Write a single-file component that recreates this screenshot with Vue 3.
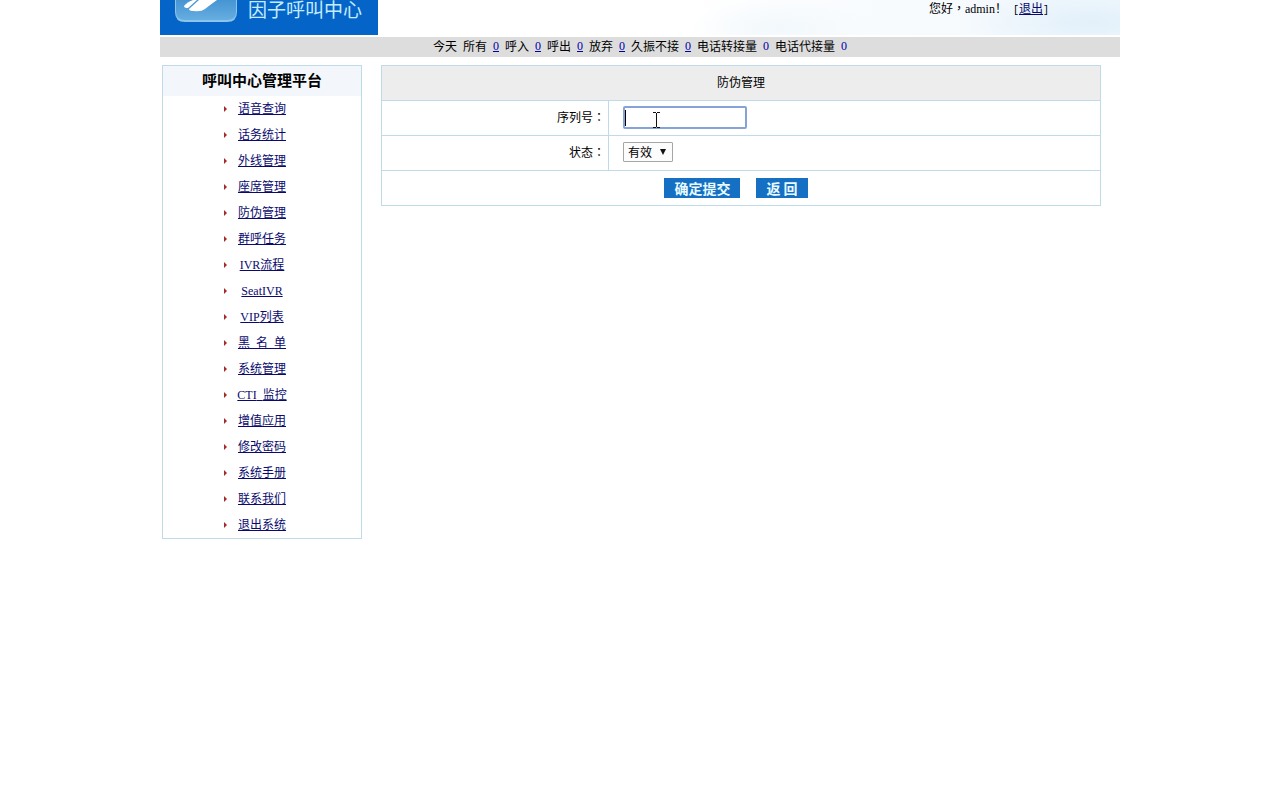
<script setup>
import { ref } from 'vue'

const stats = [
  { label: '所有', value: 0, link: true },
  { label: '呼入', value: 0, link: true },
  { label: '呼出', value: 0, link: true },
  { label: '放弃', value: 0, link: true },
  { label: '久振不接', value: 0, link: true },
  { label: '电话转接量', value: 0, link: false },
  { label: '电话代接量', value: 0, link: false },
]

const menu = [
  { cjk: '语音查询' },
  { cjk: '话务统计' },
  { cjk: '外线管理' },
  { cjk: '座席管理' },
  { cjk: '防伪管理' },
  { cjk: '群呼任务' },
  { latin: 'IVR', cjk: '流程' },
  { latin: 'SeatIVR' },
  { latin: 'VIP', cjk: '列表' },
  { spaced: ['黑', '名', '单'] },
  { cjk: '系统管理' },
  { latin: 'CTI', spaced: ['', '监控'] },
  { cjk: '增值应用' },
  { cjk: '修改密码' },
  { cjk: '系统手册' },
  { cjk: '联系我们' },
  { cjk: '退出系统' },
]

const serial = ref('')
const state = ref('有效')
</script>

<template>
  <div class="page">
    <header class="banner">
      <div class="brand">
        <svg class="logo" width="62" height="22" viewBox="0 0 62 22" aria-hidden="true">
          <defs>
            <linearGradient id="tile" x1="0" y1="0" x2="0" y2="1">
              <stop offset="0" stop-color="#3f8fd0" />
              <stop offset="1" stop-color="#66aee0" />
            </linearGradient>
          </defs>
          <path d="M0 -4H62V12Q62 22 52 22H10Q0 22 0 12Z" fill="#8cc4ea" />
          <path d="M1 -4H61V12Q61 20 52 20H10Q1 20 1 12Z" fill="url(#tile)" />
          <path d="M9 6Q12 2 18 0H22L13 8Q9 8 9 6Z" fill="#fff" />
          <path d="M14 9L24 0H42Q35 5 30 9Q26 12 19 11Q14 11 14 9Z" fill="#fff" />
        </svg>
        <span class="brand-name">因子呼叫中心</span>
      </div>
      <div class="greeting">
        <span>您好</span><span class="centered">，</span><span class="latin">admin</span><span>！</span><span class="half">&nbsp;[</span><a href="#">退出</a><span class="half">]</span>
      </div>
    </header>

    <div class="stats">
      <span>今天</span>
      <template v-for="s in stats" :key="s.label">
        <span>{{ s.label }}</span>
        <a v-if="s.link" href="#" class="latin num">{{ s.value }}</a>
        <span v-else class="latin num">{{ s.value }}</span>
      </template>
    </div>

    <div class="body">
      <nav class="side">
        <h2>呼叫中心管理平台</h2>
        <ul>
          <li v-for="(m, i) in menu" :key="i">
            <svg class="arrow" width="3" height="6" viewBox="0 0 3 6" aria-hidden="true">
              <path d="M0 0L3 3L0 6Z" fill="#a52a2a" />
            </svg>
            <a href="#"><span v-if="m.latin" class="latin">{{ m.latin }}</span><template v-if="m.cjk">{{ m.cjk }}</template><template v-if="m.spaced"><template v-for="(c, j) in m.spaced" :key="j"><span v-if="j" class="half">&nbsp;</span>{{ c }}</template></template></a>
          </li>
        </ul>
      </nav>

      <main>
        <form @submit.prevent>
          <table>
            <colgroup>
              <col class="label-col" />
              <col />
            </colgroup>
            <thead>
              <tr>
                <th colspan="2">防伪管理</th>
              </tr>
            </thead>
            <tbody>
              <tr>
                <td class="label"><label for="serial">序列号<span class="centered">：</span></label></td>
                <td class="field">
                  <div class="control">
                    <input id="serial" v-model="serial" type="text" autocomplete="off" />
                    <span class="caret"></span>
                    <svg class="ibeam" width="7" height="16" viewBox="0 0 7 16" aria-hidden="true">
                      <path d="M0 .5H3M4 .5H7M3.5 1V15M0 15.5H3M4 15.5H7" stroke="#111" fill="none" />
                    </svg>
                  </div>
                </td>
              </tr>
              <tr>
                <td class="label"><label for="state">状态<span class="centered">：</span></label></td>
                <td class="field">
                  <div class="control">
                    <select id="state" v-model="state">
                      <option>有效</option>
                      <option>无效</option>
                    </select>
                    <svg class="drop" width="6" height="6" viewBox="0 0 6 6" aria-hidden="true">
                      <path d="M0 0H6L3 6Z" fill="#111" />
                    </svg>
                  </div>
                </td>
              </tr>
              <tr>
                <td colspan="2">
                  <div class="actions">
                    <button type="submit">确定提交</button>
                    <button type="button">返 回</button>
                  </div>
                </td>
              </tr>
            </tbody>
          </table>
        </form>
      </main>
    </div>
  </div>
</template>

<style>
body {
  background: #fff;
}
</style>

<style scoped>
.page {
  max-width: 960px;
  margin: 0 auto;
  font: 12px/20px "Noto Sans CJK SC", sans-serif;
  color: #000;
}

.latin {
  font-family: "Liberation Serif", serif;
}

.half {
  font-family: "Liberation Mono", monospace;
  font-size: 10px;
}

.centered {
  font-family: "Noto Sans CJK TC", sans-serif;
}

a {
  color: #0a0a6e;
}

.banner {
  display: flex;
  justify-content: space-between;
  height: 35px;
  background:
    radial-gradient(ellipse 90px 30px at 620px 28px, #f2f8fc, transparent),
    radial-gradient(ellipse 130px 40px at 930px 22px, #e2f0fa, transparent),
    linear-gradient(90deg, #fff 55%, #f8fbfe 75%, #f3f9fd);
}

.brand {
  display: flex;
  gap: 11px;
  width: 203px;
  padding-left: 15px;
  background: #0564c8;
}

.brand-name {
  color: #c3ecff;
  font-size: 19px;
  line-height: 18px;
}

.logo {
  flex: none;
}

.greeting {
  padding-right: 71px;
  line-height: 16px;
}

.stats {
  display: flex;
  justify-content: center;
  gap: 6px;
  margin-top: 2px;
  padding-bottom: 2px;
  background: #ddd;
  line-height: 18px;
}

.num {
  color: #0000a8;
}

.body {
  display: flex;
  align-items: flex-start;
  gap: 19px;
  padding: 8px 19px 0 2px;
}

.side {
  flex: none;
  box-sizing: border-box;
  width: 200px;
  border: 1px solid #bfdae8;
}

.side h2 {
  margin: 0;
  padding-bottom: 2px;
  background: #f3f7fb;
  font-size: 15px;
  line-height: 28px;
  text-align: center;
}

.side ul {
  margin: 0;
  padding: 0;
  list-style: none;
}

.side li {
  position: relative;
  padding-bottom: 2px;
  height: 24px;
  line-height: 24px;
  text-align: center;
}

.arrow {
  position: absolute;
  left: 61px;
  top: 10px;
}

main {
  flex: 1;
}

table {
  width: 100%;
  table-layout: fixed;
  border-collapse: collapse;
}

.label-col {
  width: 227px;
}

th,
td {
  height: 34px;
  padding: 0;
  border: 1px solid #bfdae8;
}

th {
  height: 32px;
  padding-bottom: 2px;
  background: #ededed;
  font-weight: normal;
}

.label {
  height: 32px;
  padding: 0 3px 2px 0;
  text-align: right;
}

.field {
  height: 32px;
  padding: 0 0 2px 14px;
}

.control {
  position: relative;
  display: flex;
  width: fit-content;
}

input {
  box-sizing: border-box;
  width: 124px;
  height: 23px;
  padding: 2px;
  border: 2px solid #86a3d8;
  border-radius: 2px;
  outline: none;
  background: #fff;
  font: inherit;
}

.caret {
  position: absolute;
  left: 2px;
  top: 4px;
  width: 1px;
  height: 16px;
  background: #000;
}

.ibeam {
  position: absolute;
  left: 30px;
  top: 6px;
  pointer-events: none;
}

select {
  appearance: none;
  box-sizing: border-box;
  width: 50px;
  height: 20px;
  padding: 0 0 0 4px;
  border: 1px solid #a6a6a6;
  border-radius: 1px;
  background: #fcfcfc;
  color: #000;
  font: inherit;
  line-height: 18px;
}

.drop {
  position: absolute;
  right: 7px;
  top: 7px;
  pointer-events: none;
}

.actions {
  display: flex;
  justify-content: center;
  gap: 16px;
  padding-right: 10px;
}

button {
  height: 20px;
  padding: 0 10px;
  border: 0;
  background: #1570c4;
  color: #e8fbff;
  font: bold 14px/20px "Noto Sans CJK SC", sans-serif;
}
</style>
